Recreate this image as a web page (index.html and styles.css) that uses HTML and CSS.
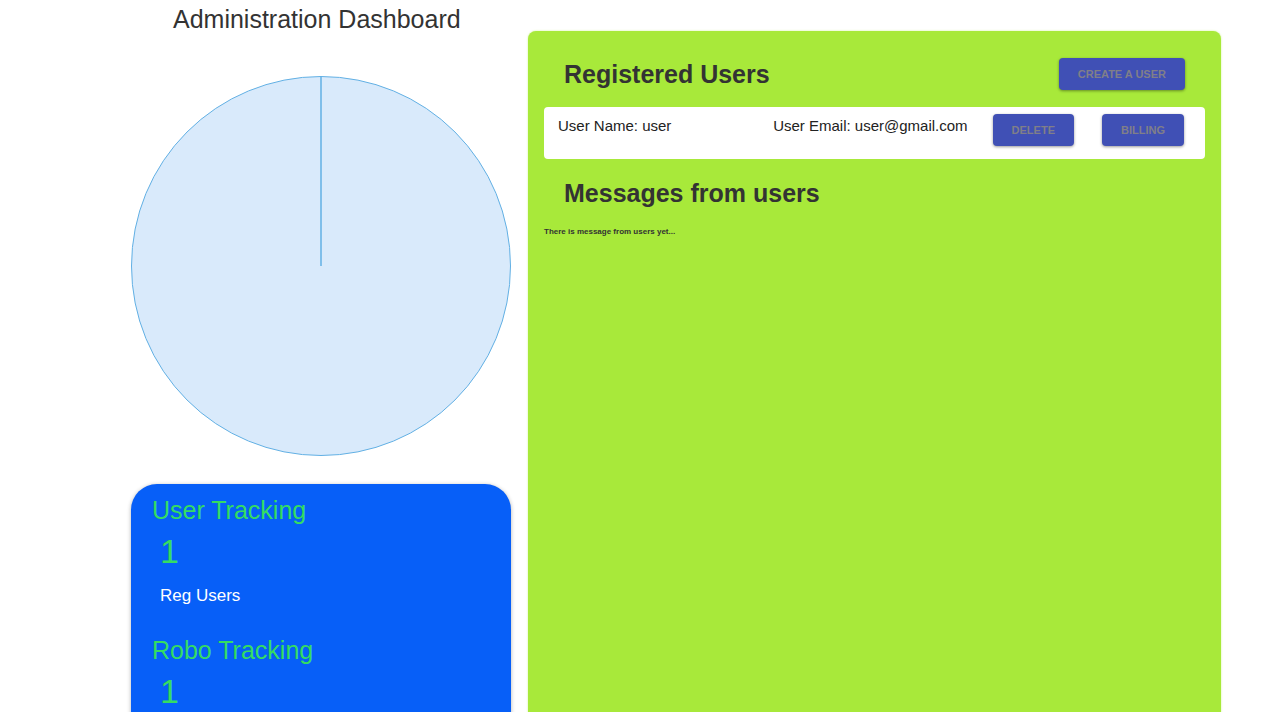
FILE: index.html
```html
<!DOCTYPE html>
<html lang="en">
<head>
<meta charset="utf-8">
<meta name="viewport" content="width=device-width, initial-scale=1">
<title>Administration Dashboard</title>
<link rel="stylesheet" href="styles.css">
</head>
<body>
<main class="dashboard">
  <section class="overview">
    <h1 class="page-title">Administration Dashboard</h1>
    <svg class="chart" viewBox="0 0 380 380" role="img" aria-label="Users chart">
      <circle cx="190" cy="190" r="189.5"/>
      <path d="M190 190V0.5" stroke-width="1.5"/>
    </svg>
    <div class="tracking">
      <section class="stat">
        <h2 class="stat-title">User Tracking</h2>
        <p class="stat-value">1</p>
        <p class="stat-label">Reg Users</p>
      </section>
      <section class="stat">
        <h2 class="stat-title">Robo Tracking</h2>
        <p class="stat-value">1</p>
      </section>
    </div>
  </section>
  <section class="panel">
    <header class="panel-header">
      <h2 class="panel-title">Registered Users</h2>
      <button class="button" type="button">Create a user</button>
    </header>
    <div class="user-row">
      <p class="user-name">User Name: user</p>
      <p class="user-email">User Email: user@gmail.com</p>
      <div class="user-actions">
        <button class="button" type="button">Delete</button>
        <button class="button" type="button">Billing</button>
      </div>
    </div>
    <h2 class="panel-title messages-title">Messages from users</h2>
    <p class="empty-note">There is message from users yet...</p>
  </section>
</main>
</body>
</html>
```
FILE: styles.css
```css
* {
  box-sizing: border-box;
}

body,
h1,
h2,
p {
  margin: 0;
}

body {
  background: #fff;
  color: #333;
  font-family: "Liberation Sans", Arial, sans-serif;
}

.dashboard {
  display: grid;
  grid-template-columns: 380fr 693fr;
  gap: 17px;
  min-height: 100vh;
  padding: 0 59px 0 131px;
}

.page-title {
  padding: 4px 0 0 42px;
  font-size: 25px;
  font-weight: 400;
  line-height: 30px;
}

.chart {
  display: block;
  width: 100%;
  margin: 42px 0 28px;
  fill: #d9eafb;
  stroke: #62b0e4;
}

.tracking {
  padding: 10px 21px 20px;
  border-radius: 26px;
  background: #075ff8;
  box-shadow: 0 1px 4px rgba(0, 0, 0, 0.3);
}

.stat {
  min-height: 140px;
  color: #35dc62;
}

.stat-title {
  font-size: 25px;
  font-weight: 400;
  line-height: 32px;
}

.stat-value {
  padding: 6px 0 0 8px;
  font-size: 34px;
  line-height: 38px;
}

.stat-label {
  padding: 16px 0 0 8px;
  color: #fff;
  font-size: 17px;
  line-height: 20px;
}

.panel {
  margin-top: 31px;
  padding: 27px 16px;
  border-radius: 8px;
  background: #a8e93a;
  box-shadow: 0 0 2px rgba(168, 233, 58, 0.6);
}

.panel-header {
  display: flex;
  align-items: center;
  justify-content: space-between;
  padding: 0 20px;
}

.panel-title {
  font-size: 25px;
  font-weight: 700;
  line-height: 32px;
}

.button {
  height: 32px;
  padding: 0 19px;
  border: 0;
  border-radius: 4px;
  background: #4050b5;
  color: #807f88;
  font: 700 11px/16px "Liberation Sans", Arial, sans-serif;
  text-transform: uppercase;
  box-shadow: 0 1px 3px rgba(0, 0, 0, 0.4);
}

.user-row {
  display: flex;
  min-height: 52px;
  margin-top: 17px;
  padding: 7px 21px 6px 14px;
  border-radius: 4px;
  background: #fff;
  color: #222;
  font-size: 15px;
  line-height: 24px;
}

.user-name {
  flex: 1;
}

.user-actions {
  display: flex;
  gap: 28px;
  margin-left: 25px;
}

.messages-title {
  padding: 18px 20px 0;
}

.empty-note {
  margin-top: 17px;
  font-size: 8px;
  font-weight: 700;
  line-height: 12px;
}
```
